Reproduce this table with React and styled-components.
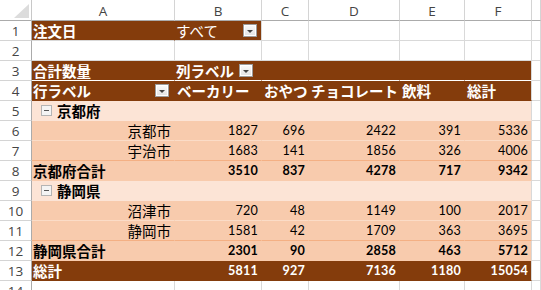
import styled, { createGlobalStyle } from "styled-components"

const GlobalStyle = createGlobalStyle`
  html, body {
    margin: 0;
    padding: 0;
    background: #fff;
    overflow: hidden;
  }
`

const COLS = "32px 143px 87px 47px 91px 65px 67px 9px"
const BROWN = "#843c0c"
const PEACH = "#f8cbad"
const LIGHT = "#fce4d6"
const ORANGE = "#f4b084"
const GRID = "#d9d9d9"

const Sheet = styled.div`
  width: 541px;
  height: 290px;
  overflow: hidden;
  display: flex;
  flex-direction: column;
  font-family: "Noto Sans CJK JP", "Noto Sans", sans-serif;
`

const Row = styled.div`
  display: grid;
  grid-template-columns: ${COLS};
  height: ${(p) => p.$h || 20}px;
  flex-shrink: 0;
`

const Corner = styled.div`
  position: relative;
  border-right: 1px solid #c8c8c8;
  border-bottom: 1px solid #ababab;
  &::after {
    content: "";
    position: absolute;
    right: 2px;
    bottom: 2px;
    width: 0;
    height: 0;
    border-left: 15px solid transparent;
    border-bottom: 14px solid #dcdcdc;
  }
`

const ColHead = styled.div`
  display: flex;
  align-items: center;
  justify-content: center;
  border-right: 1px solid #d4d4d4;
  border-bottom: 1px solid #ababab;
  font-family: "Open Sans", sans-serif;
  font-size: 13.5px;
  color: #444;
  padding-top: 1px;
`

const RowNum = styled.div`
  display: flex;
  align-items: center;
  justify-content: center;
  border-right: 1px solid #ababab;
  border-bottom: 1px solid #d4d4d4;
  font-family: "Open Sans", sans-serif;
  font-size: 13.5px;
  color: #444;
`

const Cell = styled.div`
  box-sizing: border-box;
  display: flex;
  align-items: center;
  justify-content: ${(p) => p.$align || "flex-start"};
  gap: 5px;
  background: ${(p) => p.$bg || "#fff"};
  border-right: 1px solid ${(p) => p.$br || GRID};
  border-bottom: 1px solid ${(p) => p.$bb || GRID};
  color: ${(p) => p.$color || "#000"};
  font-weight: ${(p) => (p.$bold ? 700 : 400)};
  font-size: 14.5px;
  line-height: 19px;
  padding: 0 ${(p) => p.$pr ?? 3}px 0 ${(p) => p.$pl ?? 1}px;
  white-space: nowrap;
  overflow: visible;
`

const Num = styled.span`
  font-family: Lato, "Open Sans", sans-serif;
  font-size: 12.6px;
  letter-spacing: 0.2px;
`

const Spacer = styled.span`
  flex: 1;
`

const Drop = styled.span`
  box-sizing: border-box;
  width: 14px;
  height: 13px;
  flex-shrink: 0;
  display: flex;
  align-items: center;
  justify-content: center;
  background: linear-gradient(#fafafa, #e2e2e2);
  border: 1px solid #9c9c9c;
  box-shadow: inset 0 0 0 1px #fff;
  &::after {
    content: "";
    border-left: 3px solid transparent;
    border-right: 3px solid transparent;
    border-top: 3px solid #444;
    margin-top: 1px;
  }
`

const Toggle = styled.span`
  box-sizing: border-box;
  width: 11px;
  height: 11px;
  margin-left: 8px;
  display: flex;
  align-items: center;
  justify-content: center;
  border: 1px solid #b4b4b4;
  background: #f4f4f4;
  &::after {
    content: "";
    width: 5px;
    height: 1px;
    background: #555;
  }
`

const cols = ["A", "B", "C", "D", "E", "F", ""]

const rows = [
  { type: "group", label: "京都府" },
  { type: "item", label: "京都市", v: [1827, 696, 2422, 391, 5336] },
  { type: "item", label: "宇治市", v: [1683, 141, 1856, 326, 4006], bb: ORANGE },
  { type: "sub", label: "京都府合計", v: [3510, 837, 4278, 717, 9342] },
  { type: "group", label: "静岡県" },
  { type: "item", label: "沼津市", v: [720, 48, 1149, 100, 2017] },
  { type: "item", label: "静岡市", v: [1581, 42, 1709, 363, 3695], bb: ORANGE },
  { type: "sub", label: "静岡県合計", v: [2301, 90, 2858, 463, 5712] },
  { type: "total", label: "総計", v: [5811, 927, 7136, 1180, 15054] },
]

const heads = ["ベーカリー", "おやつ", "チョコレート", "飲料", "総計"]

const Blank = ({ n }) =>
  Array.from({ length: n }, (_, i) => <Cell key={"b" + i} />)

const PivotRow = ({ r, num }) => {
  const style = {
    group: { bg: LIGHT, color: "#000", bb: LIGHT },
    item: { bg: PEACH, color: "#000", bb: r.bb || "#fbdcc7" },
    sub: { bg: PEACH, color: "#000", bb: PEACH, bold: true },
    total: { bg: BROWN, color: "#fff", bb: BROWN, bold: true },
  }[r.type]
  return (
    <Row>
      <RowNum>{num}</RowNum>
      {r.type === "group" ? (
        <Cell $bg={style.bg} $br={style.bg} $bb={style.bb} $bold>
          <Toggle />
          {r.label}
        </Cell>
      ) : (
        <Cell
          $bg={style.bg}
          $br={style.bg}
          $bb={style.bb}
          $bold={style.bold}
          $color={style.color}
          $align={r.type === "item" ? "flex-end" : "flex-start"}
        >
          {r.label}
        </Cell>
      )}
      {[0, 1, 2, 3, 4].map((i) => (
        <Cell
          key={i}
          $bg={style.bg}
          $br={i === 4 ? GRID : style.bg}
          $bb={style.bb}
          $bold={style.bold}
          $color={style.color}
          $align="flex-end"
        >
          {r.v && <Num>{r.v[i]}</Num>}
        </Cell>
      ))}
      <Cell />
    </Row>
  )
}

export default function App() {
  return (
    <Sheet>
      <GlobalStyle />
      <Row $h={21}>
        <Corner />
        {cols.map((c, i) => (
          <ColHead key={i}>{c}</ColHead>
        ))}
      </Row>

      <Row>
        <RowNum>1</RowNum>
        <Cell $bg={BROWN} $br={BROWN} $color="#fff" $bold>
          注文日
        </Cell>
        <Cell $bg={BROWN} $color="#fff" $pr={4}>
          すべて
          <Spacer />
          <Drop />
        </Cell>
        <Blank n={5} />
      </Row>

      <Row>
        <RowNum>2</RowNum>
        <Blank n={7} />
      </Row>

      <Row>
        <RowNum>3</RowNum>
        <Cell $bg={BROWN} $br={BROWN} $bb="#fff" $color="#fff" $bold>
          合計数量
        </Cell>
        <Cell $bg={BROWN} $br={BROWN} $bb="#fff" $color="#fff" $bold>
          列ラベル
          <Drop />
        </Cell>
        {[0, 1, 2, 3].map((i) => (
          <Cell key={i} $bg={BROWN} $br={i === 3 ? GRID : BROWN} $bb="#fff" />
        ))}
        <Cell />
      </Row>

      <Row>
        <RowNum>4</RowNum>
        <Cell $bg={BROWN} $br={BROWN} $bb={BROWN} $color="#fff" $bold $pr={5}>
          行ラベル
          <Spacer />
          <Drop />
        </Cell>
        {heads.map((h, i) => (
          <Cell
            key={h}
            $bg={BROWN}
            $br={i === 4 ? GRID : BROWN}
            $bb={BROWN}
            $color="#fff"
            $bold
            $pl={2}
          >
            {h}
          </Cell>
        ))}
        <Cell />
      </Row>

      {rows.map((r, i) => (
        <PivotRow key={i} r={r} num={i + 5} />
      ))}

      <Row>
        <RowNum>14</RowNum>
        <Blank n={7} />
      </Row>
    </Sheet>
  )
}
